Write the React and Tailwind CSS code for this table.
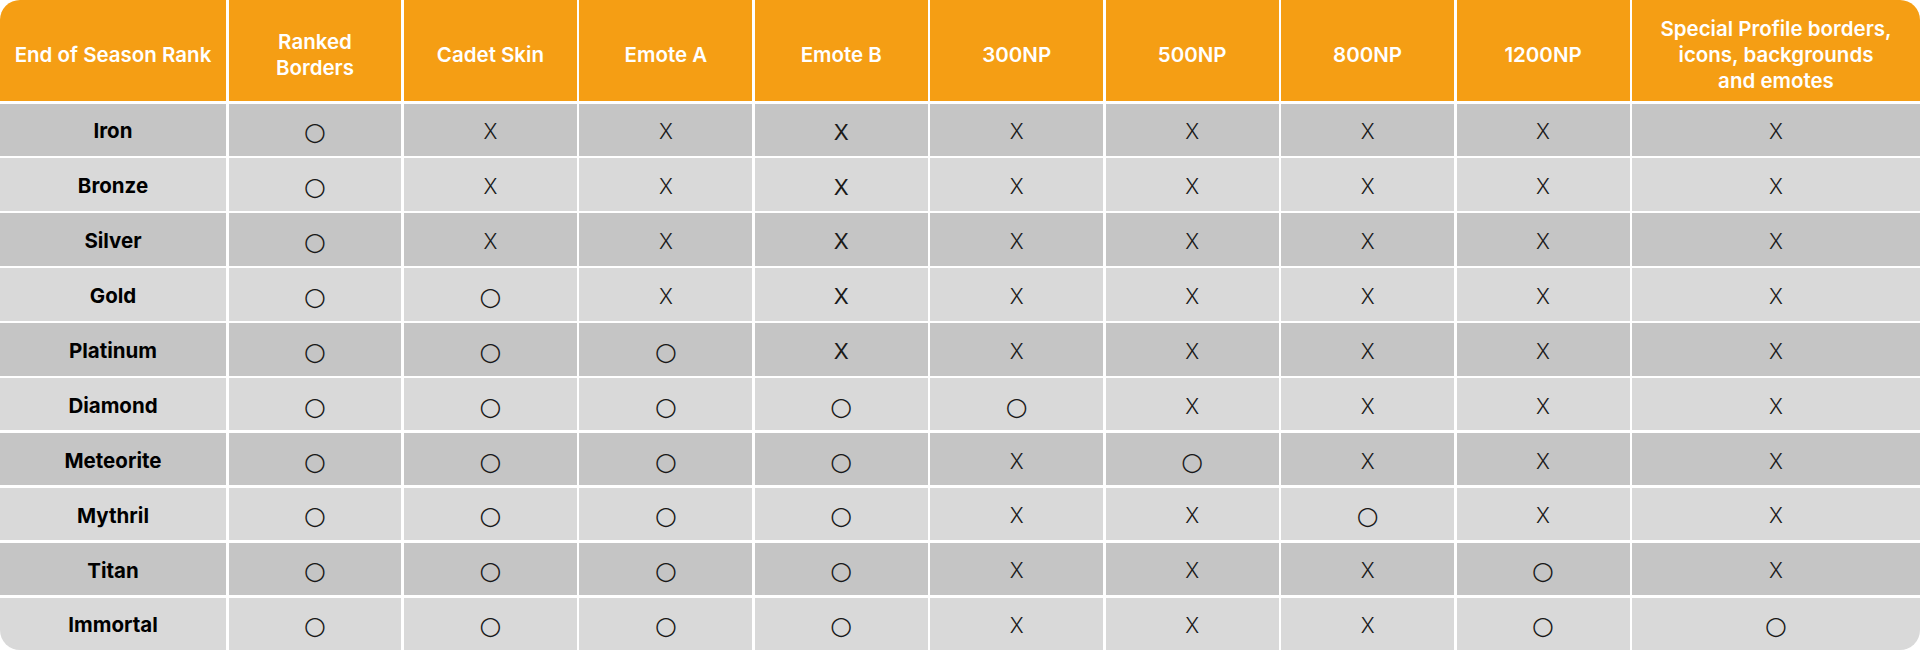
const columns = [
  "Ranked Borders",
  "Cadet Skin",
  "Emote A",
  "Emote B",
  "300NP",
  "500NP",
  "800NP",
  "1200NP",
  "Special Profile borders,\nicons, backgrounds\nand emotes",
];

// O = reward unlocked, X = not unlocked
const ranks = [
  { name: "Iron", marks: "OXXXXXXXX" },
  { name: "Bronze", marks: "OXXXXXXXX" },
  { name: "Silver", marks: "OXXXXXXXX" },
  { name: "Gold", marks: "OOXXXXXXX" },
  { name: "Platinum", marks: "OOOXXXXXX" },
  { name: "Diamond", marks: "OOOOOXXXX" },
  { name: "Meteorite", marks: "OOOOXOXXX" },
  { name: "Mythril", marks: "OOOOXXOXX" },
  { name: "Titan", marks: "OOOOXXXOX" },
  { name: "Immortal", marks: "OOOOXXXOO" },
];

function Mark({ value, bold }) {
  if (value === "O") {
    return (
      <span className="font-['DejaVu_Sans',sans-serif] text-[25px] leading-none text-[#1a1a1a]">
        ○
      </span>
    );
  }
  return (
    <span
      className={
        bold
          ? "font-['Inter',sans-serif] font-normal text-[22px] leading-none text-[#1a1a1a]"
          : "font-['Inter',sans-serif] font-light text-[21px] leading-none text-[#1a1a1a]"
      }
    >
      X
    </span>
  );
}

export default function App() {
  return (
    <div className="w-[1920px] h-[650px] bg-white font-['Inter','Liberation_Sans',sans-serif]">
      <div className="grid h-full grid-cols-[226px_repeat(8,minmax(0,1fr))_288px] grid-rows-[101px_repeat(10,minmax(0,1fr))] gap-[2.5px] rounded-[20px] overflow-hidden bg-white">
        {/* Header */}
        <div className="bg-[#f59e14] flex items-center justify-center pt-[9px] text-white font-semibold text-[20.5px] leading-[26px] text-center">
          End of Season Rank
        </div>
        {columns.map((col) => (
          <div
            key={col}
            className="bg-[#f59e14] flex items-center justify-center pt-[9px] px-3 text-white font-semibold text-[20.5px] leading-[26px] text-center whitespace-pre-line"
          >
            {col}
          </div>
        ))}

        {/* Rows */}
        {ranks.map((rank, r) => {
          const bg = r % 2 === 0 ? "bg-[#c5c5c5]" : "bg-[#d9d9d9]";
          return [
            <div
              key={rank.name}
              className={`${bg} flex items-center justify-center pt-1 font-bold text-[20.5px] text-black`}
            >
              {rank.name}
            </div>,
            ...rank.marks.split("").map((m, c) => (
              <div
                key={rank.name + c}
                className={`${bg} flex items-center justify-center pt-1`}
              >
                <Mark value={m} bold={c === 3} />
              </div>
            )),
          ];
        })}
      </div>
    </div>
  );
}
